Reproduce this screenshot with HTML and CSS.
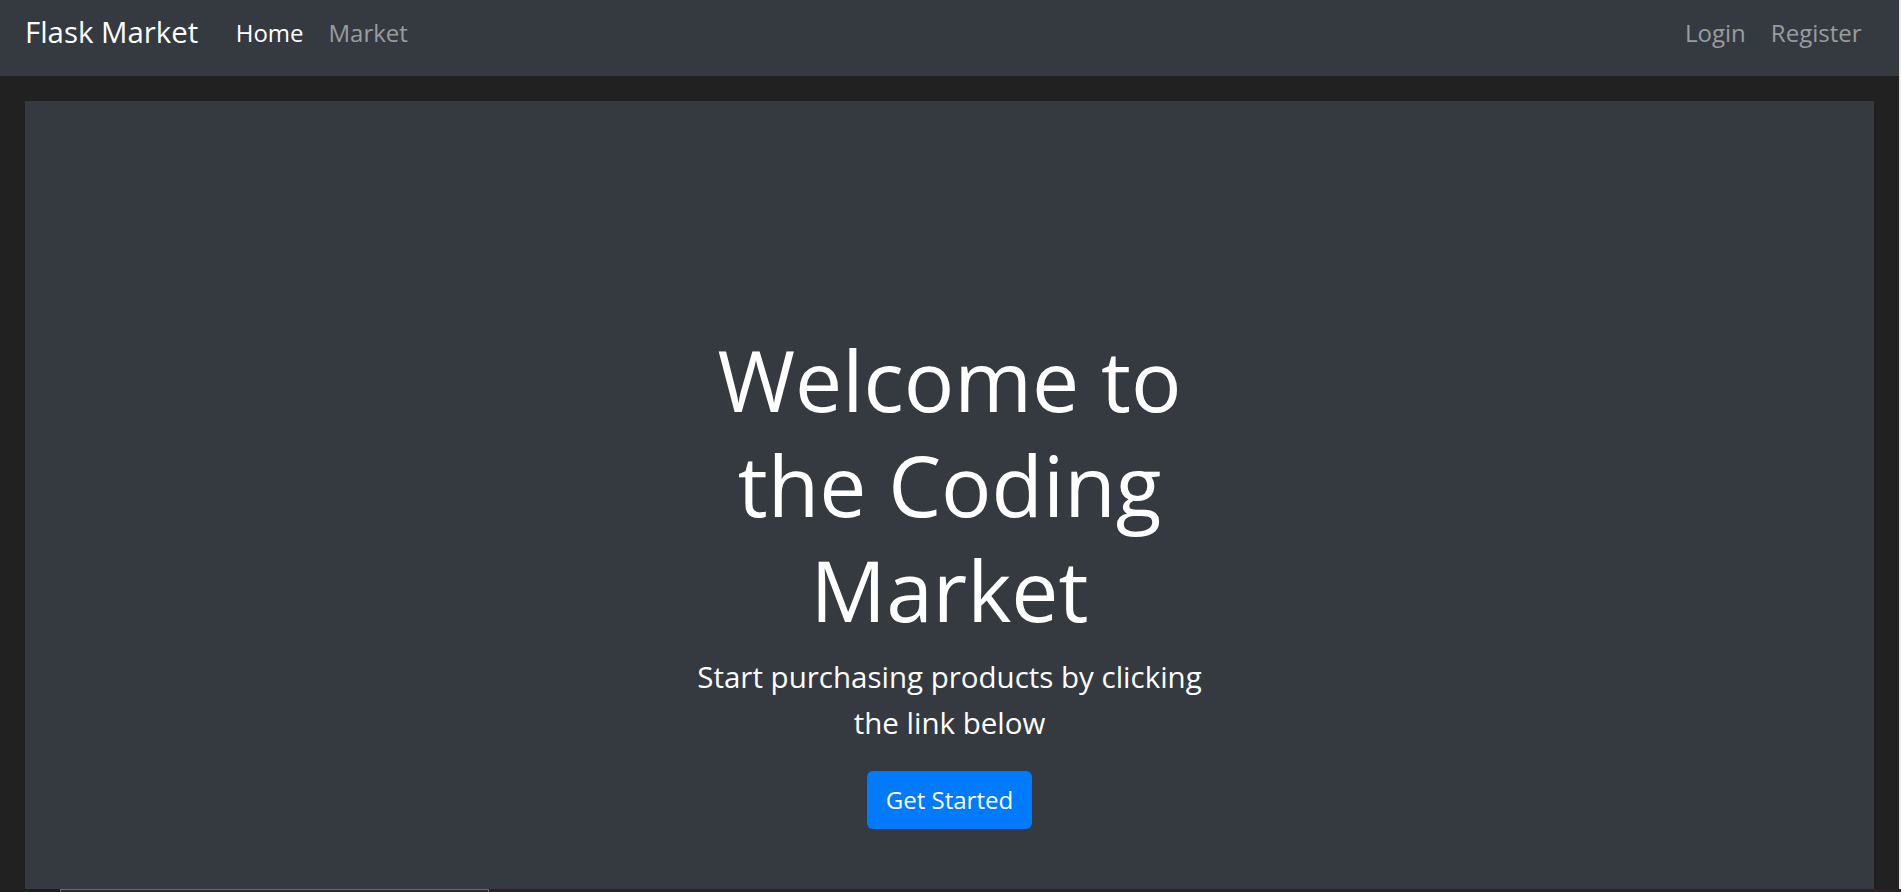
FILE: index.html
```html
<!DOCTYPE html>
<html lang="en">
<head>
<meta charset="utf-8">
<title>Flask Market</title>
<link rel="stylesheet" href="styles.css">
</head>
<body>
<div class="frame">
  <nav class="navbar">
    <a class="brand" href="#">Flask Market</a>
    <ul class="nav nav-left">
      <li><a class="nav-link active" href="#">Home</a></li>
      <li><a class="nav-link" href="#">Market</a></li>
    </ul>
    <ul class="nav nav-right">
      <li><a class="nav-link" href="#">Login</a></li>
      <li><a class="nav-link" href="#">Register</a></li>
    </ul>
  </nav>
  <main class="wrap">
    <section class="jumbotron">
      <div class="hero">
        <h1 class="display">Welcome to the Coding Market</h1>
        <p class="lead">Start purchasing products by clicking the link below</p>
        <a class="btn" href="#">Get Started</a>
      </div>
    </section>
  </main>
</div>
<div class="bottom-strip"><div class="tab"></div></div>
</body>
</html>
```

FILE: styles.css
```css
html, body {
  margin: 0;
  padding: 0;
}
body {
  background: #212121;
  font-family: "Open Sans", "Noto Sans", sans-serif;
  color: #fff;
  overflow: hidden;
  height: 892px;
}
.frame {
  width: 1899px;
  border-right: 2px solid #ececec;
}
.navbar {
  height: 76px;
  box-sizing: border-box;
  background: #343a40;
  display: flex;
  align-items: center;
  padding: 0 25px 10px 25px;
}
.brand {
  color: #fff;
  text-decoration: none;
  font-size: 29.4px;
  margin-right: 25px;
  line-height: 1;
}
.nav {
  list-style: none;
  margin: 0;
  padding: 0;
  display: flex;
}
.nav-right {
  margin-left: auto;
}
.nav-link {
  display: block;
  padding: 0 12.5px;
  font-size: 24px;
  color: rgba(255, 255, 255, 0.5);
  text-decoration: none;
  line-height: 1;
}
.nav-link.active {
  color: #fff;
}
.wrap {
  padding: 25px 25px 0 25px;
}
.jumbotron {
  background: #343a40;
  height: 788px;
  box-sizing: border-box;
  padding-top: 226px;
  display: flex;
  justify-content: center;
}
.hero {
  width: 530px;
  text-align: center;
}
.display {
  margin: 0 0 12px 0;
  font-size: 84px;
  font-weight: 400;
  line-height: 105px;
}
.lead {
  margin: 0 0 25px 0;
  font-size: 29.5px;
  font-weight: 400;
  line-height: 46px;
}
.btn {
  display: inline-block;
  background: #007bff;
  color: #fff;
  text-decoration: none;
  font-size: 24px;
  line-height: 58px;
  height: 58px;
  width: 165px;
  border-radius: 6px;
}
.bottom-strip {
  height: 3px;
  background: linear-gradient(to right, #1e1e1e 0, #1e1e1e 489px, #2a2226 489px, #2a2226 100%);
}
.tab {
  margin-left: 60px;
  width: 429px;
  height: 3px;
  box-sizing: border-box;
  border: 1px solid #6a6a6a;
  border-bottom: none;
  background: #2b2b2b;
}
```
